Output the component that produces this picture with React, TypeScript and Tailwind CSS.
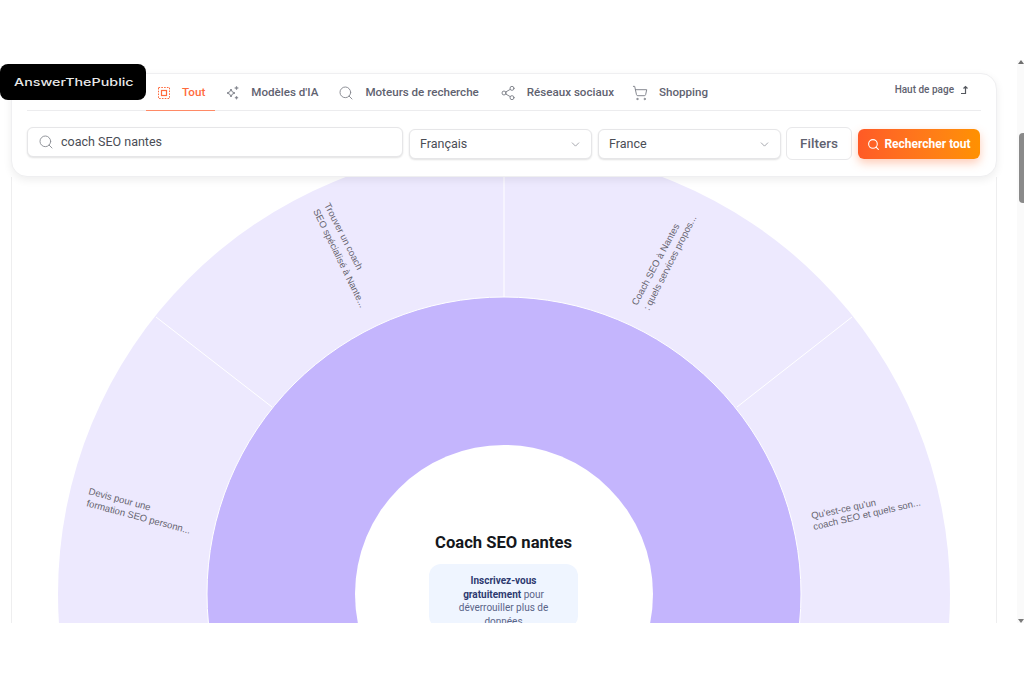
import React from 'react'
import { ChevronDown, Search, Share2, ShoppingCart } from 'lucide-react'

const TabIconAll = () => (
  <svg width="14" height="14" viewBox="0 0 14 14" fill="none" stroke="#ff6a3d" strokeWidth="1">
    <rect x="1.5" y="1.5" width="11" height="11" strokeDasharray="1.6 1.2" />
    <rect x="4.5" y="4.5" width="5" height="5" strokeWidth="1.2" />
  </svg>
)

const TabIconSparkle = () => (
  <svg width="15" height="15" viewBox="0 0 15 15" fill="none" stroke="#7c7f88" strokeWidth="1">
    <path d="M6 4 L7.2 6.8 L10 8 L7.2 9.2 L6 12 L4.8 9.2 L2 8 L4.8 6.8 Z" />
    <path d="M11.5 1 L12 2.5 L13.5 3 L12 3.5 L11.5 5 L11 3.5 L9.5 3 L11 2.5 Z" fill="#7c7f88" strokeWidth="0.4" />
    <path d="M11.5 11 L12 12.2 L13.2 12.7 L12 13.2 L11.5 14.4 L11 13.2 L9.8 12.7 L11 12.2 Z" fill="#7c7f88" strokeWidth="0.4" />
  </svg>
)

const SelectBox = ({ label }: { label: string }) => (
  <div className="mt-[2px] flex h-[30px] w-[183px] items-center justify-between rounded-md border border-[#e6e6e8] bg-white pl-[10px] pr-[9px] text-[12.5px] text-[#4a4d55] shadow-[0_1px_2px_rgba(0,0,0,0.12)]">
    <span>{label}</span>
    <ChevronDown size={13} strokeWidth={1.4} color="#8b8e95" />
  </div>
)

const labelClass = 'fill-[#66646f] text-[9.5px]'

const Wheel = () => (
  <svg className="block" width="983" height="446" viewBox="12 177 983 446">
    <circle cx="504" cy="594" r="446" fill="#ede9fe" />
    <g stroke="#ffffff" strokeWidth="1">
      <line x1="504" y1="170" x2="504" y2="297" />
      <line x1="156" y1="317" x2="272" y2="407" />
      <line x1="852" y1="317" x2="737" y2="407" />
    </g>
    <circle cx="504" cy="594" r="297" fill="#c4b5fd" stroke="#ffffff" strokeWidth="1" />
    <circle cx="504" cy="594" r="149" fill="#ffffff" />
    <g style={{ fontFamily: '"Liberation Sans", Arial, sans-serif' }}>
      <text className={labelClass} transform="translate(324 205) rotate(63)">Trouver un coach</text>
      <text className={labelClass} transform="translate(313 211) rotate(64)">SEO spécialisé à Nante...</text>
      <text className={labelClass} transform="translate(637 306) rotate(-62)">Coach SEO à Nantes</text>
      <text className={labelClass} transform="translate(649 311) rotate(-63)">: quels services propos...</text>
      <text className={labelClass} transform="translate(88 494) rotate(15)">Devis pour une</text>
      <text className={labelClass} transform="translate(86 506) rotate(15)">formation SEO personn...</text>
      <text className={labelClass} transform="translate(812 519) rotate(-12)">Qu'est-ce qu'un</text>
      <text className={labelClass} transform="translate(814 530) rotate(-13)">coach SEO et quels son...</text>
    </g>
  </svg>
)

const tabClass = 'flex items-center gap-[11px] pt-px text-[11.6px] font-medium text-[#5f6270]'

export default function App() {
  return (
    <div className="relative h-[683px] w-[1024px] overflow-hidden bg-white font-['Roboto',sans-serif]">
      <div className="flex h-[623px] pt-[60px]">
        <div className="flex min-w-0 flex-1 flex-col pl-[11px] pr-[20px] pt-[13px]">
          {/* tabs + search */}
          <div className="relative z-10 h-[104px] shrink-0 rounded-2xl border border-[#efeff1] bg-white px-[15px] shadow-[0_3px_8px_rgba(0,0,0,0.07)]">
            <div className="flex h-[37px] items-stretch justify-between border-b border-[#ececee] pl-[119px]">
              <div className="flex items-stretch">
                <div className="-mb-px flex items-center gap-[11px] border-b border-[#ff8a66] pl-[11px] pr-[10px] pt-px text-[11.7px] font-medium text-[#ff6a3d]">
                  <TabIconAll />
                  <span>Tout</span>
                </div>
                <div className={`${tabClass} pl-[10px] pr-[10px]`}>
                  <TabIconSparkle />
                  <span>Modèles d'IA</span>
                </div>
                <div className={`${tabClass} pl-[10px] pr-[10px]`}>
                  <Search size={16} strokeWidth={1.4} color="#85888f" />
                  <span>Moteurs de recherche</span>
                </div>
                <div className={`${tabClass} pl-[11px] pr-[9px]`}>
                  <Share2 size={16} strokeWidth={1.4} color="#7c7f88" />
                  <span>Réseaux sociaux</span>
                </div>
                <div className={`${tabClass} pl-[9px]`}>
                  <ShoppingCart size={16} strokeWidth={1.4} color="#7c7f88" />
                  <span>Shopping</span>
                </div>
              </div>
              <div className="flex items-center gap-[6px] pb-[5px] pr-[11px] text-[10px] font-medium text-[#5f6270]">
                <span>Haut de page</span>
                <svg width="10" height="10" viewBox="0 0 10 10" fill="none" stroke="#55585f" strokeWidth="1.2">
                  <path d="M1 8.5 H5.5 V1.5 M3.5 3.5 L5.5 1.5 L7.5 3.5" />
                </svg>
              </div>
            </div>
            <div className="mt-[16px] flex items-start gap-[6px]">
              <div className="flex h-[30px] w-[376px] items-center gap-[7px] rounded-md border border-[#e6e6e8] bg-white pl-[10px] text-[12.5px] text-[#4a4d55] shadow-[0_1px_2px_rgba(0,0,0,0.12)]">
                <Search size={16} strokeWidth={1.4} color="#8b8e95" />
                <span>coach SEO nantes</span>
              </div>
              <SelectBox label="Français" />
              <SelectBox label="France" />
              <div className="-ml-px flex h-[33px] w-[66px] items-center justify-center rounded-md border border-[#e8e8ea] bg-white text-[13.5px] font-medium text-[#5f6270]">
                Filters
              </div>
              <div className="mt-[2px] flex h-[30px] w-[122px] items-center justify-center gap-[4px] rounded-md bg-gradient-to-r from-[#ff5a26] to-[#ff9100] text-[12px] font-bold text-white shadow-[0_4px_10px_rgba(255,110,50,0.35)]">
                <Search size={13} strokeWidth={2} color="#ffffff" />
                <span>Rechercher tout</span>
              </div>
            </div>
          </div>

          {/* wheel */}
          <div className="relative min-h-0 flex-1 overflow-hidden border-x border-[#eeeeef] bg-white">
            <Wheel />
            <div className="absolute left-[417px] top-[357px] flex w-[149px] flex-col items-center">
              <div className="whitespace-nowrap text-center text-[16.6px] font-bold leading-[18px] text-[#15171c]">Coach SEO nantes</div>
              <div className="mt-[12px] w-[149px] rounded-xl bg-[#eff5ff] px-[20px] pt-[10px] text-center text-[10px] leading-[13.5px] text-[#5a6488]">
                <strong className="font-bold text-[#2d3a70]">Inscrivez-vous gratuitement</strong> pour déverrouiller plus de données
              </div>
            </div>
          </div>
        </div>

        {/* scrollbar */}
        <div className="flex w-[7px] shrink-0 flex-col items-end justify-between bg-[#fafafa]">
          <svg width="6" height="4" viewBox="0 0 6 4" fill="#6f6f6f"><path d="M3 0 L6 4 H0 Z" /></svg>
          <div className="absolute right-0 top-[133px] h-[70px] w-[5px] rounded-l bg-[#8a8a8a]" />
          <svg width="6" height="4" viewBox="0 0 6 4" fill="#7a7a7a"><path d="M0 0 H6 L3 4 Z" /></svg>
        </div>
      </div>

      {/* logo sits over the nav card */}
      <div className="absolute left-0 top-[64px] z-20 flex h-[36px] w-[146px] items-center rounded-lg bg-black pl-[14px] text-[#e8e8e8]">
        <span className="inline-block origin-left scale-x-[1.3] whitespace-nowrap font-['Inter',sans-serif] text-[11px] font-medium">AnswerThePublic</span>
      </div>
    </div>
  )
}
